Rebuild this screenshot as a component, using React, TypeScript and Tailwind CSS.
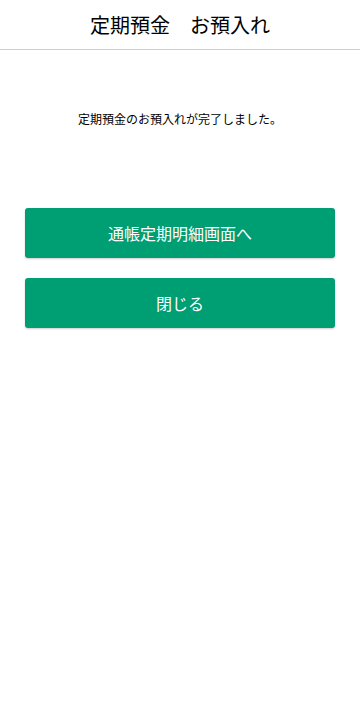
export default function App() {
  const font = { fontFamily: '"Noto Sans CJK JP", "Noto Sans", sans-serif' };
  return (
    <div className="min-h-[714px] w-full bg-white text-black" style={font}>
      <header className="flex h-[50px] items-center justify-center border-b border-[#cfcfcf]">
        <h1 className="text-[20px] leading-none">定期預金　お預入れ</h1>
      </header>
      <main className="flex flex-col items-center">
        <p className="mt-[61px] text-[12px] leading-[16px]">定期預金のお預入れが完了しました。</p>
        <div className="mt-[81px] flex w-full flex-col gap-[20px] px-[25px]">
          <button className="h-[50px] w-full rounded-[3px] bg-[#009e73] text-[16px] text-white shadow-[0_1px_2px_rgba(0,0,0,0.2)]">
            通帳定期明細画面へ
          </button>
          <button className="h-[50px] w-full rounded-[3px] bg-[#009e73] text-[16px] text-white shadow-[0_1px_2px_rgba(0,0,0,0.2)]">
            閉じる
          </button>
        </div>
      </main>
    </div>
  );
}
